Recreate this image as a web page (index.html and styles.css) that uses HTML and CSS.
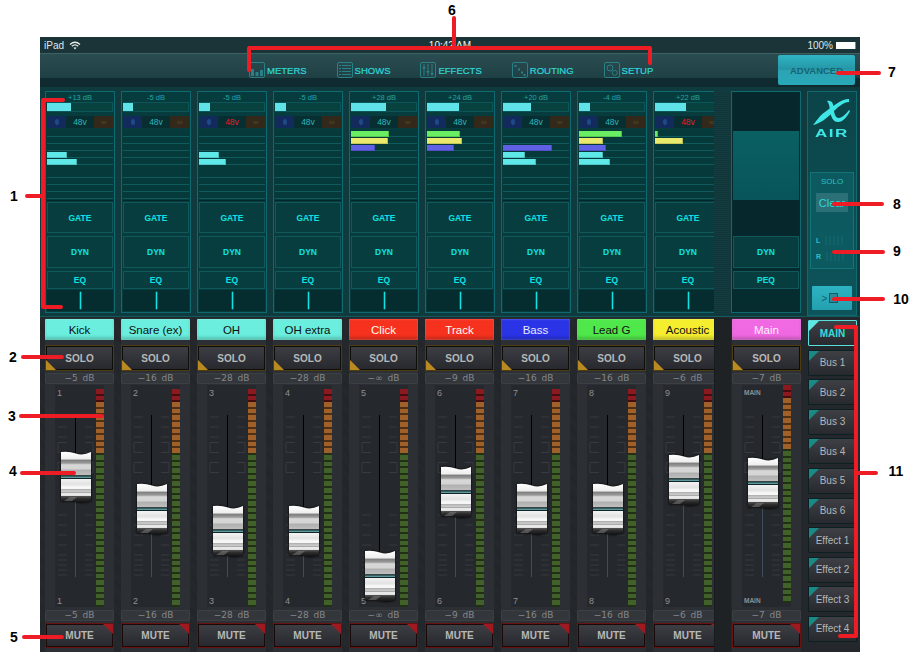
FILE: index.html
```html
<!DOCTYPE html>
<html lang="en">
<head>
<meta charset="utf-8">
<title>X AIR Mixer</title>
<link rel="stylesheet" href="styles.css">
</head>
<body>
<svg class="defs" aria-hidden="true">
  <defs>
    <linearGradient id="chromeA" x1="0" y1="0" x2="0" y2="1">
      <stop offset="0" stop-color="#fff"/><stop offset=".3" stop-color="#eee"/><stop offset=".36" stop-color="#808080"/><stop offset=".48" stop-color="#9a9a9a"/><stop offset=".55" stop-color="#d8d8d8"/><stop offset=".72" stop-color="#d4d4d4"/><stop offset=".78" stop-color="#b0b0b0"/><stop offset="1" stop-color="#c0c0c0"/>
    </linearGradient>
    <linearGradient id="chromeB" x1="0" y1="0" x2="0" y2="1">
      <stop offset="0" stop-color="#f4f4f4"/><stop offset=".3" stop-color="#e2e2e2"/><stop offset=".55" stop-color="#fff"/><stop offset=".62" stop-color="#b0b0b0"/><stop offset=".72" stop-color="#cfcfcf"/><stop offset=".8" stop-color="#a8a8a8"/><stop offset=".86" stop-color="#f0f0f0"/><stop offset="1" stop-color="#dcdcdc"/>
    </linearGradient>
    <linearGradient id="chromeC" x1="0" y1="0" x2="0" y2="1">
      <stop offset="0" stop-color="#555"/><stop offset=".4" stop-color="#2c2c2c"/><stop offset="1" stop-color="#121212"/>
    </linearGradient>
    <symbol id="knob" viewBox="0 0 30 52">
      <path d="M0 1Q8 0 15 2.500T30 1V24.500H0Z" fill="url(#chromeA)"/>
      <path d="M0 28H30V45H0Z" fill="url(#chromeB)"/>
      <path d="M0 24.500H30V28H0Z" fill="#0f2426"/>
      <path d="M0 25.500H30V27H0Z" fill="#5f9a9c"/>
      <path d="M0 45H30V50.500Q22 52.500 15 51T0 50.500Z" fill="url(#chromeC)"/>
      <path d="M3 50L9 46H16L11 50Z" fill="#9a9a9a" opacity=".4"/>
    </symbol>
    <symbol id="ticks" viewBox="0 0 49 222">
      <path d="M3 32H12M30 32H38M3 42H12M30 42H38M3 52H12M30 52H38M3 130H12M30 130H38M3 140H12M30 140H38M3 150H12M30 150H38M3 160H12M30 160H38M3 170H12M30 170H38M3 175H12M30 175H38M3 180H12M30 180H38M3 185H12M30 185H38M3 190H12M30 190H38" stroke="#373a40" fill="none"/>
      <path d="M12 57.500H3V67.500H12M30 57.500H38V67.500H30M12 77.500H3V87.500H12M30 77.500H38V87.500H30" stroke="#373a40" fill="none"/>
    </symbol>
  </defs>
</svg>

<main class="app">
  <header class="status">
    <div class="status-left">iPad
      <svg class="wifi" viewBox="0 0 12 9"><path d="M1 3.500Q6-1 11 3.500M2.800 5.300Q6 2.400 9.200 5.300" fill="none" stroke="#e8eeee" stroke-width="1.300"/><path d="M4.500 6.800Q6 5.600 7.500 6.800L6 8.400Z" fill="#e8eeee"/></svg>
    </div>
    <div class="status-time">10:42 AM</div>
    <div class="status-right">100% <span class="battery"></span></div>
  </header>

  <nav class="nav">
    <div class="tabs">
      <a class="tab"><svg class="tab-icon" viewBox="0 0 16 16"><rect x=".5" y=".5" width="15" height="15" rx="1.500"/><path class="fill" d="M2 7H5V14H2ZM6.500 10H9.500V14H6.500ZM11 8H14V14H11Z"/></svg>METERS</a>
      <a class="tab"><svg class="tab-icon" viewBox="0 0 16 16"><rect x=".5" y=".5" width="15" height="15" rx="1.500"/><path d="M2 3.500H4M5 3.500H14M2 6.500H4M5 6.500H14M2 9.500H4M5 9.500H14M2 12.500H4M5 12.500H14"/></svg>SHOWS</a>
      <a class="tab"><svg class="tab-icon" viewBox="0 0 16 16"><rect x=".5" y=".5" width="15" height="15" rx="1.500"/><path d="M4 2V14M8 2V14M12 2V14"/><path class="fill" d="M2.500 5H5.500V6.500H2.500ZM6.500 9H9.500V10.500H6.500ZM10.500 11H13.500V12.500H10.500Z"/></svg>EFFECTS</a>
      <a class="tab"><svg class="tab-icon" viewBox="0 0 16 16"><rect x=".5" y=".5" width="15" height="15" rx="1.500"/><path class="fill" d="M2.500 3H4.500V5H2.500ZM6 6.500H8V8.500H6ZM9 9.500H11V11.500H9ZM11.500 12H13.500V14H11.500Z"/></svg>ROUTING</a>
      <a class="tab"><svg class="tab-icon" viewBox="0 0 16 16"><rect x=".5" y=".5" width="15" height="15" rx="1.500"/><circle cx="6" cy="6" r="3"/><circle cx="10.800" cy="10.800" r="2.500"/></svg>SETUP</a>
    </div>
    <button class="advanced">ADVANCED</button>
  </nav>

  <section class="row row-top">
    <div class="inputs">
      <article class="ch">
        <div class="gain"><span>+13 dB</span><div class="gain-bar"><i style="width:24px"></i></div></div>
        <div class="power"><b class="mic"><em></em></b><span>48v</span><b class="link">∞</b></div>
        <div class="sends"><i class="cy" style="grid-row:4;width:20px"></i><i class="cy" style="grid-row:5;width:30px"></i></div>
        <div class="fx gate">GATE</div><div class="fx dyn">DYN</div><div class="fx eq">EQ</div><div class="pan"><i></i></div>
      </article>
      <article class="ch">
        <div class="gain"><span>-5 dB</span><div class="gain-bar"><i style="width:10px"></i></div></div>
        <div class="power"><b class="mic"><em></em></b><span>48v</span><b class="link">∞</b></div>
        <div class="sends"></div>
        <div class="fx gate">GATE</div><div class="fx dyn">DYN</div><div class="fx eq">EQ</div><div class="pan"><i></i></div>
      </article>
      <article class="ch">
        <div class="gain"><span>-5 dB</span><div class="gain-bar"><i style="width:11px"></i></div></div>
        <div class="power"><b class="mic"><em></em></b><span class="on">48v</span><b class="link">∞</b></div>
        <div class="sends"><i class="cy" style="grid-row:4;width:20px"></i><i class="cy" style="grid-row:5;width:27px"></i></div>
        <div class="fx gate">GATE</div><div class="fx dyn">DYN</div><div class="fx eq">EQ</div><div class="pan"><i></i></div>
      </article>
      <article class="ch">
        <div class="gain"><span>-5 dB</span><div class="gain-bar"><i style="width:11px"></i></div></div>
        <div class="power"><b class="mic"><em></em></b><span>48v</span><b class="link">∞</b></div>
        <div class="sends"></div>
        <div class="fx gate">GATE</div><div class="fx dyn">DYN</div><div class="fx eq">EQ</div><div class="pan"><i></i></div>
      </article>
      <article class="ch">
        <div class="gain"><span>+28 dB</span><div class="gain-bar"><i style="width:35px"></i></div></div>
        <div class="power"><b class="mic"><em></em></b><span>48v</span><b class="link">∞</b></div>
        <div class="sends"><i class="gr" style="grid-row:1;width:38px"></i><i class="ye" style="grid-row:2;width:37px"></i><i class="bl" style="grid-row:3;width:24px"></i></div>
        <div class="fx gate">GATE</div><div class="fx dyn">DYN</div><div class="fx eq">EQ</div><div class="pan"><i></i></div>
      </article>
      <article class="ch">
        <div class="gain"><span>+24 dB</span><div class="gain-bar"><i style="width:32px"></i></div></div>
        <div class="power"><b class="mic"><em></em></b><span>48v</span><b class="link">∞</b></div>
        <div class="sends"><i class="gr" style="grid-row:1;width:33px"></i><i class="ye" style="grid-row:2;width:35px"></i><i class="bl" style="grid-row:3;width:27px"></i></div>
        <div class="fx gate">GATE</div><div class="fx dyn">DYN</div><div class="fx eq">EQ</div><div class="pan"><i></i></div>
      </article>
      <article class="ch">
        <div class="gain"><span>+20 dB</span><div class="gain-bar"><i style="width:28px"></i></div></div>
        <div class="power"><b class="mic"><em></em></b><span>48v</span><b class="link">∞</b></div>
        <div class="sends"><i class="bl" style="grid-row:3;width:49px"></i><i class="cy" style="grid-row:4;width:22px"></i><i class="cy" style="grid-row:5;width:33px"></i></div>
        <div class="fx gate">GATE</div><div class="fx dyn">DYN</div><div class="fx eq">EQ</div><div class="pan"><i></i></div>
      </article>
      <article class="ch">
        <div class="gain"><span>-4 dB</span><div class="gain-bar"><i style="width:11px"></i></div></div>
        <div class="power"><b class="mic"><em></em></b><span>48v</span><b class="link">∞</b></div>
        <div class="sends"><i class="gr" style="grid-row:1;width:43px"></i><i class="ye" style="grid-row:2;width:24px"></i><i class="bl" style="grid-row:3;width:27px"></i><i class="cy" style="grid-row:4;width:24px"></i><i class="cy" style="grid-row:5;width:31px"></i></div>
        <div class="fx gate">GATE</div><div class="fx dyn">DYN</div><div class="fx eq">EQ</div><div class="pan"><i></i></div>
      </article>
      <article class="ch">
        <div class="gain"><span>+22 dB</span><div class="gain-bar"><i style="width:31px"></i></div></div>
        <div class="power"><b class="mic"><em></em></b><span class="on">48v</span><b class="link">∞</b></div>
        <div class="sends"><i class="gr" style="grid-row:1;width:3px"></i><i class="ye" style="grid-row:2;width:28px"></i></div>
        <div class="fx gate">GATE</div><div class="fx dyn">DYN</div><div class="fx eq">EQ</div><div class="pan"><i></i></div>
      </article>
    </div>
    <div class="gutter"></div>
    <article class="ch ch-main">
      <div class="main-dark"></div><div class="main-lit"></div><div class="main-dark main-dark-b"></div>
      <div class="fx dyn">DYN</div><div class="fx eq">PEQ</div><div class="pan"></div>
    </article>
    <aside class="side">
      <div class="logo">
        <svg class="logo-x" viewBox="0 0 38 28"><path d="M0 27C3 24 6 18 12 14C19 9 28 1 36 1L36 4C30 4 24 10 19 15C13 21 6 26 0 27Z"/><path d="M14 3C18 2 20 4 20.500 9C21 15 22 20 26 20C29 20 33 16 36 12L37 13C34 19 30 24 25 24C20 24 18 19 17 13C16.500 8 16 5 14 3Z"/></svg>
        <span class="logo-air">AIR</span>
      </div>
      <div class="solo-box">
        <span class="solo-title">SOLO</span>
        <button class="clear">Clear</button>
        <div class="lr"><span>L</span><i></i></div>
        <div class="lr"><span>R</span><i></i></div>
      </div>
      <button class="pager"><span>&gt;</span><i></i></button>
    </aside>
  </section>

  <section class="row row-bottom">
    <div class="inputs">
      <article class="strip">
        <div class="name cyan">Kick</div><button class="solo">SOLO</button><div class="db">−5 dB</div>
        <div class="fader" style="--y:66px"><span class="num">1</span><span class="num num-b">1</span><svg class="ticks"><use href="#ticks"/></svg><i class="groove"></i><svg class="knob"><use href="#knob"/></svg><i class="meter"></i></div>
        <div class="db">−5 dB</div><button class="mute">MUTE</button>
      </article>
      <article class="strip">
        <div class="name cyan">Snare (ex)</div><button class="solo">SOLO</button><div class="db">−16 dB</div>
        <div class="fader" style="--y:98px"><span class="num">2</span><span class="num num-b">2</span><svg class="ticks"><use href="#ticks"/></svg><i class="groove"></i><svg class="knob"><use href="#knob"/></svg><i class="meter"></i></div>
        <div class="db">−16 dB</div><button class="mute">MUTE</button>
      </article>
      <article class="strip">
        <div class="name cyan">OH</div><button class="solo">SOLO</button><div class="db">−28 dB</div>
        <div class="fader" style="--y:120px"><span class="num">3</span><span class="num num-b">3</span><svg class="ticks"><use href="#ticks"/></svg><i class="groove"></i><svg class="knob"><use href="#knob"/></svg><i class="meter"></i></div>
        <div class="db">−28 dB</div><button class="mute">MUTE</button>
      </article>
      <article class="strip">
        <div class="name cyan">OH extra</div><button class="solo">SOLO</button><div class="db">−28 dB</div>
        <div class="fader" style="--y:120px"><span class="num">4</span><span class="num num-b">4</span><svg class="ticks"><use href="#ticks"/></svg><i class="groove"></i><svg class="knob"><use href="#knob"/></svg><i class="meter"></i></div>
        <div class="db">−28 dB</div><button class="mute">MUTE</button>
      </article>
      <article class="strip">
        <div class="name red">Click</div><button class="solo">SOLO</button><div class="db">−∞ dB</div>
        <div class="fader" style="--y:165px"><span class="num">5</span><span class="num num-b">5</span><svg class="ticks"><use href="#ticks"/></svg><i class="groove"></i><svg class="knob"><use href="#knob"/></svg><i class="meter"></i></div>
        <div class="db">−∞ dB</div><button class="mute">MUTE</button>
      </article>
      <article class="strip">
        <div class="name red">Track</div><button class="solo">SOLO</button><div class="db">−9 dB</div>
        <div class="fader" style="--y:81px"><span class="num">6</span><span class="num num-b">6</span><svg class="ticks"><use href="#ticks"/></svg><i class="groove"></i><svg class="knob"><use href="#knob"/></svg><i class="meter"></i></div>
        <div class="db">−9 dB</div><button class="mute">MUTE</button>
      </article>
      <article class="strip">
        <div class="name blue">Bass</div><button class="solo">SOLO</button><div class="db">−16 dB</div>
        <div class="fader" style="--y:98px"><span class="num">7</span><span class="num num-b">7</span><svg class="ticks"><use href="#ticks"/></svg><i class="groove"></i><svg class="knob"><use href="#knob"/></svg><i class="meter"></i></div>
        <div class="db">−16 dB</div><button class="mute">MUTE</button>
      </article>
      <article class="strip">
        <div class="name green">Lead G</div><button class="solo">SOLO</button><div class="db">−16 dB</div>
        <div class="fader" style="--y:98px"><span class="num">8</span><span class="num num-b">8</span><svg class="ticks"><use href="#ticks"/></svg><i class="groove"></i><svg class="knob"><use href="#knob"/></svg><i class="meter"></i></div>
        <div class="db">−16 dB</div><button class="mute">MUTE</button>
      </article>
      <article class="strip">
        <div class="name yellow">Acoustic</div><button class="solo">SOLO</button><div class="db">−6 dB</div>
        <div class="fader" style="--y:69px"><span class="num">9</span><span class="num num-b">9</span><svg class="ticks"><use href="#ticks"/></svg><i class="groove"></i><svg class="knob"><use href="#knob"/></svg><i class="meter"></i></div>
        <div class="db">−6 dB</div><button class="mute">MUTE</button>
      </article>
    </div>
    <div class="gutter"></div>
    <article class="strip strip-main">
      <div class="name pink">Main</div><button class="solo">SOLO</button><div class="db">−7 dB</div>
      <div class="fader fader-main" style="--y:72px"><span class="num">MAIN</span><span class="num num-b">MAIN</span><svg class="ticks"><use href="#ticks"/></svg><i class="groove"></i><svg class="knob"><use href="#knob"/></svg><i class="meter"></i></div>
      <div class="db">−7 dB</div><button class="mute">MUTE</button>
    </article>
    <aside class="buses">
      <button class="bus active">MAIN</button>
      <button class="bus">Bus 1</button>
      <button class="bus">Bus 2</button>
      <button class="bus">Bus 3</button>
      <button class="bus">Bus 4</button>
      <button class="bus">Bus 5</button>
      <button class="bus">Bus 6</button>
      <button class="bus">Effect 1</button>
      <button class="bus">Effect 2</button>
      <button class="bus">Effect 3</button>
      <button class="bus">Effect 4</button>
    </aside>
  </section>
</main>

<svg class="notes" viewBox="0 0 915 662" aria-label="Callouts">
  <path d="M27 196H43M63 100H43V307H61M23 357H62M21 416H102M22 473H74M24 637H62M454 18V48M249 70V48H650V63M838 73H879M834 204H882M834 252H883M834 299H883M836 327H856V636H840M857 473H876" />
  <text x="14" y="201">1</text>
  <text x="13" y="362">2</text>
  <text x="12" y="421">3</text>
  <text x="13" y="476">4</text>
  <text x="14" y="642">5</text>
  <text x="452" y="15">6</text>
  <text x="892" y="77">7</text>
  <text x="897" y="209">8</text>
  <text x="897" y="256">9</text>
  <text x="901" y="304">10</text>
  <text x="896" y="476">11</text>
</svg>
</body>
</html>
```
FILE: styles.css
```css
* { box-sizing: border-box; }
html, body { margin: 0; padding: 0; background: #fff; }
body { width: 915px; height: 662px; overflow: hidden; position: relative; font-family: "Liberation Sans", Arial, sans-serif; }
.defs { position: absolute; width: 0; height: 0; }
button { font-family: inherit; padding: 0; cursor: pointer; }

.app { margin: 37px 0 0 40px; width: 820px; height: 615px; display: flex; flex-direction: column; overflow: hidden; background: #24272b; }

/* status bar */
.status { height: 16px; flex: none; background: #1b3437; color: #dfe8e8; font-size: 10px; display: grid; grid-template-columns: 1fr auto 1fr; align-items: center; padding: 0 4px; }
.status-left { display: flex; align-items: center; gap: 5px; }
.wifi { width: 12px; height: 9px; }
.status-time { color: #f0f4f4; }
.status-right { display: flex; justify-content: flex-end; align-items: center; gap: 3px; }
.battery { width: 19px; height: 7px; background: #fff; box-shadow: 1px 0 0 #7a8a8a; margin-right: 1px; }

/* navigation */
.nav { height: 34px; flex: none; display: flex; align-items: flex-start; border-top: 1px solid #3d6163; background: linear-gradient(#2a4d51 0, #1f4045 24px, #102c30 24px, #0e2a2e 33px); }
.tabs { display: flex; gap: 30px; margin: 8px 0 0 209px; width: 529px; }
.tab { display: flex; align-items: center; gap: 2px; color: #2fd8da; font-size: 9.500px; height: 16px; white-space: nowrap; -webkit-text-stroke: .2px #2fd8da; }
.tab-icon { width: 16px; height: 16px; flex: none; fill: none; stroke: #2a8085; stroke-width: 1; }
.tab-icon .fill { fill: #2a8085; stroke: none; }
.advanced { width: 77px; height: 30px; margin-top: 1px; border: 0; border-radius: 2px; background: linear-gradient(#2fb4c4, #2596a6 48%, #2ba4b4 52%, #2aa8b8); color: #166472; font-size: 9.500px; font-weight: 700; }

/* shared row layout */
.row { display: flex; flex: none; }
.inputs { width: 674px; flex: none; display: flex; gap: 6px; padding-left: 5px; overflow: hidden; }
.gutter { width: 17px; flex: none; }

/* upper section */
.row-top { height: 230px; background: #0f3b3e; padding-top: 4px; border-bottom: 1px solid #0f5a5c; }
.row-top .gutter { background: repeating-linear-gradient(0deg, #143c3f 0 1px, #10353a 1px 2px); }
.ch { width: 70px; height: 222px; flex: none; border: 1px solid #0e6a70; background: #063c3e; padding: 1px; display: flex; flex-direction: column; }
.gain { height: 21px; flex: none; display: flex; flex-direction: column; color: #22a5a6; font-size: 7.500px; text-align: center; line-height: 9px; }
.gain-bar { height: 10px; background: #07423f; box-shadow: inset 0 0 0 1px #0c5558; padding-top: 1px; }
.gain-bar i { display: block; height: 8px; background: #5fe3e8; }
.power { height: 12px; margin-top: 2px; flex: none; display: flex; align-items: center; justify-content: space-between; background: #072e31; color: #2cb8b8; font-size: 8.500px; }
.power .on { color: #e81c24; }
.mic, .link { width: 19px; height: 12px; display: flex; align-items: center; justify-content: center; font-weight: 400; }
.mic { background: #132b5c; }
.mic em { width: 4px; height: 6px; background: #1e4a88; border-radius: 50%; }
.link { background: #33291a; color: #5c4a1c; font-size: 8px; }
.sends { height: 71px; margin-top: 2px; flex: none; display: grid; grid-template-rows: repeat(10, 6.900px); justify-items: start; align-content: start; padding-top: 1px; background: repeating-linear-gradient(#05393a 0 6px, #0f5a5c 6px 6.900px); border-bottom: 1px solid #052629; }
.sends i { grid-column: 1; height: 6px; border-right: 1px solid rgba(0,0,0,.2); border-bottom: 1px solid rgba(0,0,0,.15); }
.cy { background: #5fe8e8; }
.gr { background: #68ee60; }
.ye { background: #e9e96c; }
.bl { background: #6060e6; }
.fx { flex: none; border: 1px solid #11585b; background: #083d40; color: #0fe2e2; font-size: 8.500px; font-weight: 700; display: flex; align-items: center; justify-content: center; }
.gate { height: 31px; margin-top: 1px; }
.dyn { height: 32px; margin-top: 3px; }
.eq { height: 18px; margin-top: 3px; }
.pan { flex: 1; display: flex; align-items: center; justify-content: center; background: #052c2f; margin-top: 1px; }
.pan i { width: 1px; height: 17px; background: #0fe2e2; box-shadow: 0 0 0 .3px #0fe2e2; }
.ch-main { background: #072a2e; }
.main-dark { height: 38px; flex: none; background: #06282c; }
.main-lit { height: 69px; flex: none; background: linear-gradient(#0a6063, #08555a); }
.main-dark-b { height: 36px; }
.main-dark-b + .dyn { margin-top: 0; }
.side { width: 50px; flex: none; margin-left: 6px; height: 225px; border: 1px solid #0e6a70; background: linear-gradient(#0b4448, #0d555b); display: flex; flex-direction: column; align-items: center; }
.logo { height: 80px; flex: none; display: flex; flex-direction: column; align-items: center; padding-top: 6px; }
.logo-x { width: 38px; height: 28px; fill: #3fe6e6; }
.logo-air { color: #3fe6e6; font-size: 11px; font-weight: 700; letter-spacing: 1px; transform: scaleX(1.550); margin-top: 2px; line-height: 10px; }
.solo-box { width: 44px; height: 97px; flex: none; border: 1px solid #127478; background: #0c5a60; display: flex; flex-direction: column; align-items: center; padding-top: 3px; }
.solo-title { color: #2cc0c4; font-size: 8px; line-height: 11px; }
.clear { width: 32px; height: 21px; margin-top: 6px; margin-bottom: 23px; border: 0; background: #2a7076; color: #2fd8da; font-size: 11px; }
.lr { width: 100%; height: 10px; margin-bottom: 7px; display: flex; align-items: center; gap: 5px; padding-left: 5px; color: #2cc0c4; font-size: 7px; font-weight: 700; }
.lr i { width: 19px; height: 9px; background: repeating-linear-gradient(90deg, #106268 0 2px, #0c5a60 2px 4px); }
.pager { width: 40px; height: 24px; margin-top: 17px; border: 0; border-radius: 1px; background: linear-gradient(#2db3c2, #24a0b0); color: #125c68; display: flex; align-items: center; justify-content: center; gap: 2px; font-size: 10px; padding-right: 4px; }
.pager i { width: 9px; height: 10px; border: 1px solid #125c68; background: #2a8a98; }

/* lower section */
.row-bottom { height: 335px; padding-top: 1px; }
.row-bottom .inputs { gap: 7px; background: repeating-linear-gradient(45deg, #26292d 0 1px, #222528 1px 2px); }
.row-bottom .gutter { background: #1f2225; border-left: 1px solid #191c1f; }
.strip { width: 69px; flex: none; background: #2c2f34; display: flex; flex-direction: column; padding-top: 1px; }
.strip-main { margin-left: 1px; }
.name { height: 21px; flex: none; display: flex; align-items: center; justify-content: center; font-size: 11.500px; white-space: nowrap; border-radius: 1px; box-shadow: inset 0 -3px 3px rgba(0,0,0,.18), inset 0 0 2px rgba(255,255,255,.45); }
.cyan { background: #6aeedd; color: #101010; }
.red { background: #f6321f; color: #ffe; }
.blue { background: #2a34e6; color: #e8eaff; }
.green { background: #4fe84a; color: #101010; }
.yellow { background: #f4ee2e; color: #101010; }
.pink { background: #f068e2; color: #fff0fb; }
.solo, .mute { height: 26px; flex: none; font-size: 10px; font-weight: 700; color: #b8b8b8; background: linear-gradient(#3c3e43, #28292e); position: relative; }
.solo { margin-top: 5px; border: 2px solid #0e0d08; outline: 1px solid #4e3d10; outline-offset: -1px; }
.solo::before { content: ""; position: absolute; left: -1px; bottom: -1px; border: 5px solid transparent; border-left-color: #b88a20; border-bottom-color: #b88a20; }
.mute { margin-top: 2px; height: 25px; border: 2px solid #1a0908; outline: 1px solid #6a1210; outline-offset: -1px; }
.mute::after { content: ""; position: absolute; right: -1px; top: -1px; border: 5px solid transparent; border-right-color: #a01820; border-top-color: #a01820; }
.db { height: 11px; margin-top: 2px; flex: none; border-radius: 2px; background: #33363b; box-shadow: inset 0 0 0 1px #3c3f44; color: #85888c; font: 9px/11px "DejaVu Sans", sans-serif; text-align: center; word-spacing: 2px; }
.fader { height: 222px; margin: 1px 0 1px 10px; width: 49px; flex: none; position: relative; background: #25282c; display: flex; justify-content: flex-end; padding-top: 4px; }
.num { position: absolute; left: 2px; top: 3px; color: #8e9094; font-size: 9px; line-height: 10px; }
.num-b { top: auto; bottom: 1px; }
.fader-main .num { font-size: 6.500px; font-weight: 700; }
.fader-main { padding-top: 0; }
.ticks { position: absolute; left: 0; top: 0; width: 49px; height: 222px; }
.groove { position: absolute; left: 19.500px; top: 30px; width: 1.500px; height: 162px; background: linear-gradient(#000 calc(var(--y) - 20px), #414c5c calc(var(--y) - 20px)); }
.knob { position: absolute; left: 5.500px; top: var(--y); width: 30px; height: 52px; filter: drop-shadow(0 0 1px #000); }
.meter { position: relative; display: block; width: 8px; height: 218px; background: repeating-linear-gradient(transparent 0 4.600px, rgba(0,0,0,.5) 4.600px 6.600px), linear-gradient(#8a1a20 0 13px, #a0602a 13px 64px, #42602a 64px); }

/* bus list */
.buses { width: 49px; flex: none; margin-left: 7px; margin-top: 2px; display: flex; flex-direction: column; gap: 3.600px; }
.bus { height: 26px; flex: none; border: 1px solid #0b2023; border-radius: 1px; background: linear-gradient(#3e4045, #28292e); color: #b4b6b8; font-size: 10px; position: relative; white-space: nowrap; }
.bus::before { content: ""; position: absolute; left: 0; top: 0; border: 5px solid transparent; border-left-color: #1a8a86; border-top-color: #1a8a86; }
.bus.active { color: #35dcdc; font-weight: 700; border: 1px solid #5ae0dc; }
.bus.active::before { border-left-color: #5ee8e0; border-top-color: #5ee8e0; }

/* callouts */
.notes { position: absolute; left: 0; top: 0; width: 915px; height: 662px; pointer-events: none; }
.notes path { fill: none; stroke: #ee1c25; stroke-width: 4; stroke-linecap: round; stroke-linejoin: round; }
.notes text { font: 700 14px "Liberation Sans", sans-serif; fill: #000; text-anchor: middle; }
```
